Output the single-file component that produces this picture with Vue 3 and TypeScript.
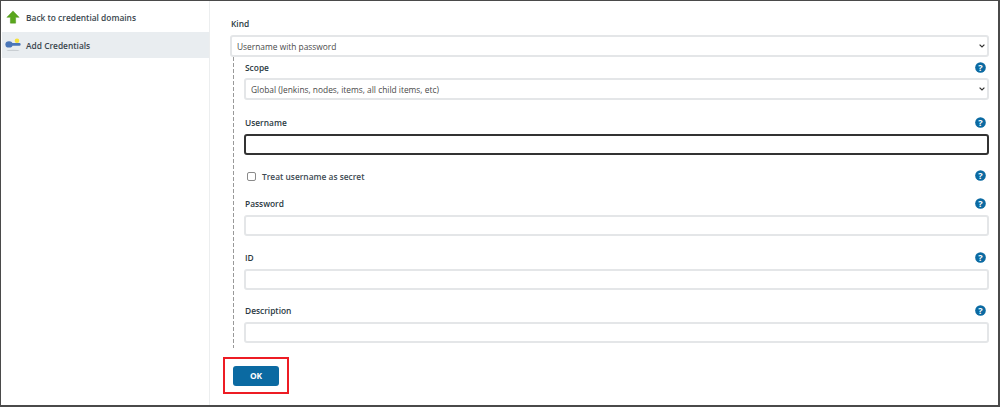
<script setup lang="ts">
import { ref } from "vue"

const kind = ref("Username with password")
const scope = ref("Global (Jenkins, nodes, items, all child items, etc)")
const secret = ref(false)
const username = ref("")
const password = ref("")
const id = ref("")
const description = ref("")
</script>

<template>
<div class="frame">
  <aside class="side">
    <a class="side-item">
      <svg class="ico" width="14" height="14" viewBox="0 0 16 16">
        <path d="M8 1 15 8.4H11V15H5V8.4H1Z" fill="#5aa71d" stroke="#4c8f18" stroke-width=".5"/>
      </svg>
      <span>Back to credential domains</span>
    </a>
    <a class="side-item active">
      <svg class="ico key" width="16" height="14" viewBox="0 0 16 14">
        <ellipse cx="8" cy="12.4" rx="6.5" ry=".7" fill="#c9ced2"/>
        <ellipse cx="4" cy="6.4" rx="3.6" ry="3.2" fill="#4a76b8"/>
        <rect x="6" y="5" width="9.6" height="2.8" rx="1.2" fill="#4a76b8"/>
        <circle cx="12" cy="2.8" r="2.3" fill="#f4e13c"/>
      </svg>
      <span>Add Credentials</span>
    </a>
  </aside>

  <main class="content">
    <div class="field top">
      <label class="label">Kind</label>
      <select v-model="kind" class="ctl">
        <option>Username with password</option>
      </select>
    </div>

    <div class="nested">
      <div class="field">
        <div class="head">
          <label class="label">Scope</label>
          <svg class="help" viewBox="0 0 12 12"><circle cx="6" cy="6" r="5.8"/><text x="6" y="9.4" text-anchor="middle">?</text></svg>
        </div>
        <select v-model="scope" class="ctl">
          <option>Global (Jenkins, nodes, items, all child items, etc)</option>
        </select>
      </div>

      <div class="field gap-user">
        <div class="head">
          <label class="label">Username</label>
          <svg class="help" viewBox="0 0 12 12"><circle cx="6" cy="6" r="5.8"/><text x="6" y="9.4" text-anchor="middle">?</text></svg>
        </div>
        <input v-model="username" class="ctl focus" type="text">
      </div>

      <div class="head check-row">
        <label class="check">
          <input v-model="secret" type="checkbox">
          <span>Treat username as secret</span>
        </label>
        <svg class="help" viewBox="0 0 12 12"><circle cx="6" cy="6" r="5.8"/><text x="6" y="9.4" text-anchor="middle">?</text></svg>
      </div>

      <div class="field gap-pass">
        <div class="head">
          <label class="label">Password</label>
          <svg class="help" viewBox="0 0 12 12"><circle cx="6" cy="6" r="5.8"/><text x="6" y="9.4" text-anchor="middle">?</text></svg>
        </div>
        <input v-model="password" class="ctl" type="text">
      </div>

      <div class="field gap-next">
        <div class="head">
          <label class="label">ID</label>
          <svg class="help" viewBox="0 0 12 12"><circle cx="6" cy="6" r="5.8"/><text x="6" y="9.4" text-anchor="middle">?</text></svg>
        </div>
        <input v-model="id" class="ctl" type="text">
      </div>

      <div class="field gap-desc">
        <div class="head">
          <label class="label">Description</label>
          <svg class="help" viewBox="0 0 12 12"><circle cx="6" cy="6" r="5.8"/><text x="6" y="9.4" text-anchor="middle">?</text></svg>
        </div>
        <input v-model="description" class="ctl" type="text">
      </div>
    </div>

    <div class="mark">
      <button class="ok">OK</button>
    </div>
  </main>
</div>
</template>

<style>
html, body {
  margin: 0;
  background: #fff;
}
</style>

<style scoped>
.frame {
  box-sizing: border-box;
  width: 1000px;
  height: 407px;
  display: flex;
  border: 1px solid #4a4a4a;
  border-width: 1px 2px 2px 1px;
  font-family: "Open Sans", "Noto Sans", sans-serif;
  font-size: 8.4px;
  color: #333;
  overflow: hidden;
}
.side {
  width: 208px;
  flex: none;
  padding-top: 2px;
  border-right: 1px solid #eceeef;
}
.side-item {
  height: 28px;
  display: flex;
  align-items: center;
  gap: 6px;
  padding-left: 5px;
  margin-bottom: 1px;
  font-weight: 600;
  color: #3a464d;
}
.side-item.active {
  background: #e9edf0;
  height: 26px;
  padding-left: 3px;
  margin-left: 1px;
  gap: 5px;
}
.ico {
  flex: none;
}
.content {
  flex: 1;
  padding: 16px 9px 0 20px;
  min-width: 0;
}
.label {
  font-weight: 600;
  line-height: 14px;
  display: block;
  padding-left: 1px;
  color: #2b3a42;
}
.top .label {
  margin-bottom: 5px;
}
.head {
  display: flex;
  align-items: center;
  justify-content: space-between;
  height: 14px;
  margin-bottom: 4px;
}
.help {
  width: 11px;
  height: 11px;
  margin: 0 3px 2px 0;
  flex: none;
  fill: #0b6aa2;
}
.help text {
  fill: #fff;
  font-size: 10px;
  font-weight: 700;
  font-family: "Open Sans", sans-serif;
}
.ctl {
  box-sizing: border-box;
  display: block;
  width: 100%;
  height: 21px;
  border: 2px solid #e4e6e8;
  border-radius: 3px;
  background: #fff;
  font: inherit;
  color: #4a4a4a;
  padding: 0 5px;
  outline: none;
}
select.ctl {
  height: 22px;
  margin-top: -1px;
  appearance: none;
  background-image: url("data:image/svg+xml,%3Csvg xmlns='http://www.w3.org/2000/svg' width='6' height='4' viewBox='0 0 6 4'%3E%3Cpath d='M.6.6 3 3 5.4.6' fill='none' stroke='%23333' stroke-width='1.2'/%3E%3C/svg%3E");
  background-repeat: no-repeat;
  background-position: right 2px center;
}
.ctl.focus {
  border-color: #333;
}
.nested {
  margin: 0 0 0 3px;
  padding: 4px 0 5px 11px;
  background-image: linear-gradient(#999 65%, transparent 65%);
  background-size: 1px 6px;
  background-repeat: repeat-y;
  background-position: left top;
}
.gap-user {
  margin-top: 16px;
}
.check-row {
  margin-top: 14px;
  margin-bottom: 0;
}
.check {
  display: flex;
  align-items: center;
  gap: 6px;
  font-weight: 600;
  color: #3d4a52;
}
.check input {
  appearance: none;
  box-sizing: border-box;
  width: 9px;
  height: 9px;
  margin: 0 0 0 3px;
  border: 1px solid #8a8a8a;
  border-radius: 2px;
  background: #fff;
}
.gap-pass {
  margin-top: 14px;
}
.gap-next {
  margin-top: 15px;
}
.gap-desc {
  margin-top: 14px;
}
.mark {
  width: 66px;
  height: 37px;
  box-sizing: border-box;
  margin: 9px 0 0 -7px;
  border: 2px solid #ed1c24;
  display: flex;
  align-items: center;
  justify-content: center;
}
.ok {
  width: 46px;
  height: 20px;
  border: none;
  border-radius: 3px;
  background: #0b6aa2;
  color: #fff;
  font: inherit;
  font-weight: 700;
  padding: 0;
}
</style>
